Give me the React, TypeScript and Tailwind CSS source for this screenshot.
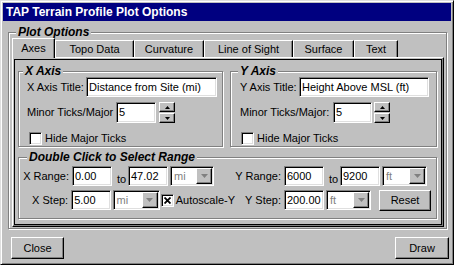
import React from 'react';

const sunken =
  'border border-t-[#808080] border-l-[#808080] border-b-white border-r-white shadow-[inset_1px_1px_0_#000,inset_-1px_-1px_0_#dfdfdf]';
const raised =
  'border border-t-white border-l-white border-b-black border-r-black shadow-[inset_-1px_-1px_0_#808080]';
const etched = 'relative border border-[#808080] shadow-[inset_1px_1px_0_#fff,1px_1px_0_#fff]';

const Legend = ({ text, className }: { text: string; className: string }) => (
  <span className={`absolute top-[-8px] bg-[#c0c0c0] px-[2px] text-[12px] font-bold italic leading-[14px] ${className}`}>
    {text}
  </span>
);

const Field = ({ value, className }: { value: string; className: string }) => (
  <div className={`${sunken} bg-white flex items-center pl-[2px] whitespace-nowrap overflow-hidden ${className}`}>
    {value}
  </div>
);

const Arrow = ({ down }: { down?: boolean }) => (
  <svg width="5" height="3" viewBox="0 0 5 3">
    <path d={down ? 'M0 0h5L2.5 3z' : 'M2.5 0L5 3H0z'} fill="#000" />
  </svg>
);

const Spinner = ({ className }: { className: string }) => (
  <div className={`flex flex-col gap-[1px] w-[16px] ${className}`}>
    <div className={`${raised} bg-[#c0c0c0] h-[10px] flex items-center justify-center`}>
      <Arrow />
    </div>
    <div className={`${raised} bg-[#c0c0c0] h-[10px] flex items-center justify-center`}>
      <Arrow down />
    </div>
  </div>
);

const Combo = ({ value, className }: { value: string; className: string }) => (
  <div className={`${sunken} bg-white flex h-[20px] p-[1px] ${className}`}>
    <span className="flex-1 flex items-center pl-[2px] text-[#808080]">{value}</span>
    <div className={`${raised} bg-[#c0c0c0] w-[16px] flex items-center justify-center`}>
      <svg width="7" height="4" viewBox="0 0 7 4">
        <path d="M0 0h7L3.5 4z" fill="#808080" />
      </svg>
    </div>
  </div>
);

const Check = ({ checked }: { checked?: boolean }) => (
  <div className={`${sunken} bg-white w-[13px] h-[13px] flex items-center justify-center shrink-0`}>
    {checked && (
      <svg width="7" height="7" viewBox="0 0 7 7">
        <path d="M0.5 0.5L6.5 6.5M6.5 0.5L0.5 6.5" stroke="#000" strokeWidth="1.8" />
      </svg>
    )}
  </div>
);

const Button = ({ label, className }: { label: string; className: string }) => (
  <div className={`${raised} bg-[#c0c0c0] flex items-center justify-center ${className}`}>{label}</div>
);

const tabs = [
  { name: 'Topo Data', w: 'w-[79px]' },
  { name: 'Curvature', w: 'w-[70px]' },
  { name: 'Line of Sight', w: 'w-[89px]' },
  { name: 'Surface', w: 'w-[61px]' },
  { name: 'Text', w: 'w-[44px]' },
];

export default function App() {
  return (
    <div className="w-[454px] h-[265px] bg-[#c0c0c0] border border-t-[#dfdfdf] border-l-[#dfdfdf] border-r-black border-b-black shadow-[inset_1px_1px_0_#fff,inset_-1px_-1px_0_#808080] p-[2px] text-[11px] text-black leading-none font-['Liberation_Sans',Arial,sans-serif]">
      <div className="h-[18px] bg-[#000080] text-white font-bold text-[12px] flex items-center pl-[3px]">
        TAP Terrain Profile Plot Options
      </div>

      {/* Plot Options frame */}
      <div className={`${etched} mt-[11px] ml-[5px] w-[439px] h-[197px]`}>
        <Legend text="Plot Options" className="left-[7px]" />

        <div className="flex items-end ml-[3px] mt-[5px]">
          <div className="relative z-10 w-[43px] h-[20px] mb-[-1px] bg-[#c0c0c0] border-t border-l border-r border-t-white border-l-white border-r-black shadow-[inset_-1px_0_0_#808080] flex items-center justify-center pb-[1px]">
            Axes
          </div>
          {tabs.map((t) => (
            <div
              key={t.name}
              className={`${t.w} h-[17px] border-t border-l border-r border-t-white border-l-white border-r-black shadow-[inset_-1px_0_0_#808080] flex items-center justify-center`}
            >
              {t.name}
            </div>
          ))}
        </div>

        <div className="ml-[3px] w-[432px] h-[170px] border border-t-white border-l-white border-r-black border-b-black">
          <div className="h-full border-r border-b border-[#808080] pt-[1px] pl-[1px]">
            <div className="w-[428px] h-[166px] border border-black">
              <div className="flex mt-[11px] ml-[3px]">
                {/* X Axis */}
                <div className={`${etched} w-[205px] h-[76px]`}>
                  <Legend text="X Axis" className="left-[4px]" />
                  <div className="flex items-center mt-[5px] ml-[8px]">
                    <span className="w-[59px] whitespace-nowrap">X Axis Title:</span>
                    <Field value="Distance from Site (mi)" className="w-[131px] h-[20px]" />
                  </div>
                  <div className="flex items-center mt-[5px] ml-[8px]">
                    <span className="w-[89px] whitespace-nowrap">Minor Ticks/Major</span>
                    <Field value="5" className="w-[40px] h-[21px]" />
                    <Spinner className="ml-[3px]" />
                  </div>
                  <div className="flex items-center mt-[9px] ml-[10px]">
                    <Check />
                    <span className="ml-[3px]">Hide Major Ticks</span>
                  </div>
                </div>

                {/* Y Axis */}
                <div className={`${etched} ml-[7px] w-[207px] h-[76px]`}>
                  <Legend text="Y Axis" className="left-[7px]" />
                  <div className="flex items-center mt-[5px] ml-[9px]">
                    <span className="w-[59px] whitespace-nowrap">Y Axis Title:</span>
                    <Field value="Height Above MSL (ft)" className="w-[130px] h-[20px]" />
                  </div>
                  <div className="flex items-center mt-[5px] ml-[9px]">
                    <span className="w-[93px] whitespace-nowrap">Minor Ticks/Major:</span>
                    <Field value="5" className="w-[39px] h-[21px]" />
                    <Spinner className="ml-[2px]" />
                  </div>
                  <div className="flex items-center mt-[9px] ml-[10px]">
                    <Check />
                    <span className="ml-[3px]">Hide Major Ticks</span>
                  </div>
                </div>
              </div>

              {/* Range */}
              <div className={`${etched} mt-[10px] ml-[3px] w-[419px] h-[62px]`}>
                <Legend text="Double Click to Select Range" className="left-[8px]" />
                <div className="flex mt-[8px] h-[20px]">
                  <div className="w-[216px] flex">
                    <span className="ml-[5px] w-[48px] pr-[3px] flex justify-end items-center whitespace-nowrap">X Range:</span>
                    <Field value="0.00" className="w-[40px] h-[20px]" />
                    <span className="ml-[5px] w-[11px] self-end pb-[1px]">to</span>
                    <Field value="47.02" className="w-[40px] h-[20px]" />
                    <Combo value="mi" className="ml-[2px] w-[44px]" />
                  </div>
                  <div className="flex">
                    <span className="w-[49px] pr-[3px] flex justify-end items-center whitespace-nowrap">Y Range:</span>
                    <Field value="6000" className="w-[40px] h-[20px]" />
                    <span className="ml-[5px] w-[11px] self-end pb-[1px]">to</span>
                    <Field value="9200" className="w-[40px] h-[20px]" />
                    <Combo value="ft" className="ml-[2px] w-[45px]" />
                  </div>
                </div>
                <div className="flex mt-[4px] h-[20px]">
                  <div className="w-[216px] flex items-center">
                    <span className="ml-[5px] w-[48px] pr-[3px] flex justify-end whitespace-nowrap">X Step:</span>
                    <Field value="5.00" className="w-[40px] h-[20px]" />
                    <Combo value="mi" className="ml-[2px] w-[48px]" />
                    <div className="ml-[1px]">
                      <Check checked />
                    </div>
                    <span className="ml-[2px] whitespace-nowrap">Autoscale-Y</span>
                  </div>
                  <div className="flex items-center">
                    <span className="w-[49px] pr-[3px] flex justify-end whitespace-nowrap">Y Step:</span>
                    <Field value="200.00" className="w-[40px] h-[20px]" />
                    <Combo value="ft" className="ml-[2px] w-[45px]" />
                    <Button label="Reset" className="ml-[8px] w-[52px] h-[21px]" />
                  </div>
                </div>
              </div>
            </div>
          </div>
        </div>
      </div>

      <div className="flex justify-between mt-[8px]">
        <Button label="Close" className="ml-[8px] w-[53px] h-[22px]" />
        <Button label="Draw" className="mr-[2px] w-[54px] h-[22px]" />
      </div>
    </div>
  );
}
